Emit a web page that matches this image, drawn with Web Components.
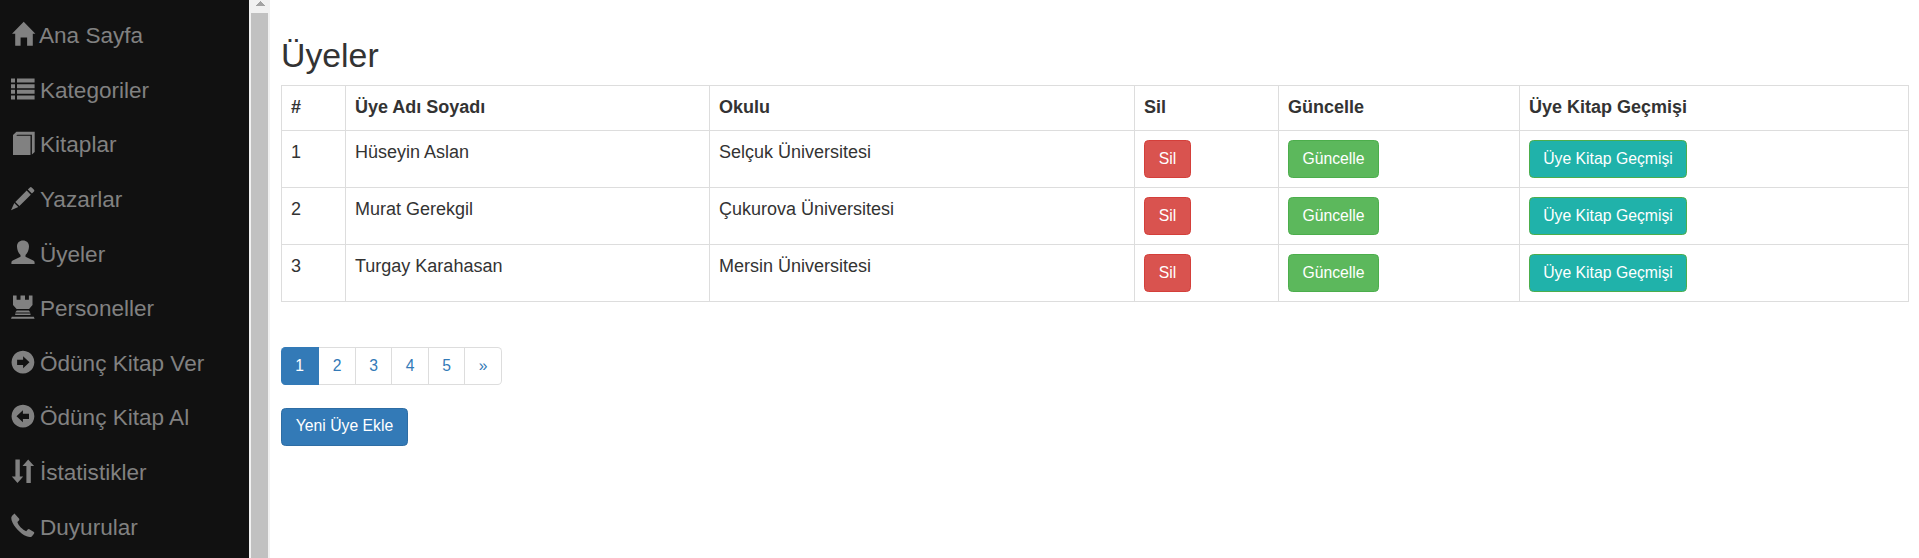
<!DOCTYPE html>
<html lang="tr">
<head>
<meta charset="utf-8">
<title>Üyeler</title>
<style>
html, body { margin: 0; height: 100%; overflow: hidden; background: #fff; }
body { font-family: "Liberation Sans", Arial, sans-serif; color: #333; }
</style>
</head>
<body>
<library-app></library-app>
<script>
const define = (name, html) => {
  const template = document.createElement('template');
  template.innerHTML = html;
  customElements.define(name, class extends HTMLElement {
    constructor() {
      super();
      this.attachShadow({ mode: 'open' }).append(template.content.cloneNode(true));
    }
  });
};

const icons = {
  home: '<path d="M12.7 -.8 24.4 11.2H21.8V23.2H16.1V14.8H9.6V23.2H4.2V11.2H1L12.7 -.8Z"/>',
  list: '<path d="M0 1h4v4H0zM6 1h17.6v4H6zM0 6.6h4v4H0zM6 6.6h17.6v4H6zM0 12.2h4v4H0zM6 12.2h17.6v4H6zM0 17.8h4v4H0zM6 17.8h17.6v4H6z"/>',
  book: '<path d="M2 3.4 5.4.2H23.7V20.3L20.9 23V3.1H6.4L5.2 4.2H19.5V23.4H2Z"/>',
  pencil: '<path d="M16.8 2.9 18.9.8Q19.8 0 20.7.8L23 3.1Q23.8 4 23 4.9L20.9 7ZM15.7 4 19.8 8.1 8.4 19.5 4.3 15.4ZM3.3 16.5 7.3 20.5 0 23.7Z"/>',
  user: '<path d="M12 0C15.7 0 18.2 2.5 18 6.2C17.8 9.4 16.8 12.5 14.5 14.3V16.2L22.3 19.8Q23.6 20.4 23.6 21.8V23.4H.4V21.8Q.4 20.4 1.7 19.8L9.5 16.2V14.3C7.2 12.5 6.2 9.4 6 6.2C5.8 2.5 8.3 0 12 0Z"/>',
  tower: '<path d="M2 0H5.6V4.2H9.5V0H14V4.2H17.9V0H21.5V9.5L18.1 13.4H5.6L2 9.5ZM5.8 15H17.9L19.3 17H4.2ZM4.2 17.8H19.5V19.4H4.2ZM.8 21.1H22.8L23.6 23.2H0Z"/>',
  right: '<path fill-rule="evenodd" d="M12 .2A11.4 11.4 0 1 1 11.9.2ZM12.1 5.7V9.2H6.1V14.3H12.1V17.7L18.5 11.7Z"/>',
  left: '<path fill-rule="evenodd" d="M12 .2A11.4 11.4 0 1 1 11.9.2ZM11.9 5.7V9.2H18V14.3H11.9V17.7L5.5 11.7Z"/>',
  sort: '<path d="M4.4 0H8.8V17H12.2L6.5 23.5.8 17H4.4ZM17.2 0 23.1 6.4H19.8V23.3H15.4V6.4H11.5Z"/>',
  phone: '<path d="M3.5 0 8.2 5.2Q8.7 6.2 7.7 7.1L6.4 8.5C7.2 11.9 11.7 16.4 15.2 17.7L16.7 16Q17.7 15.1 18.7 15.8L22.9 18.5Q23.7 19.2 23 20.2L20.8 22.8Q19.2 24 15.6 22.7C9.5 20.3 2.7 13.2.6 6.7Q-.3 3.7.9 2.4Z"/>'
};

customElements.define('side-link', class extends HTMLElement {
  connectedCallback() {
    this.attachShadow({ mode: 'open' }).innerHTML = `
      <style>
        :host { display: flex; align-items: center; gap: 5px; height: 54.6px; color: #818181; font-size: 22.55px; line-height: 28px; white-space: nowrap; }
        :host([icon=home]) { gap: 4px; }
        svg { width: 24px; height: 24px; flex: none; fill: currentColor; overflow: visible; padding-top: .6px; }
        span { padding-top: 3.8px; }
        :host([icon=home]) span { padding-top: 2.6px; }
      </style>
      <svg viewBox="0 0 24 24" aria-hidden="true">${icons[this.getAttribute('icon')]}</svg><span><slot></slot></span>`;
  }
});

define('side-nav', `
  <style>
    :host { display: block; box-sizing: border-box; width: 249px; height: 558px; overflow: hidden; background: #111; padding: 7px 0 0 11px; }
  </style>
  <nav><slot></slot></nav>`);

define('scroll-rail', `
  <style>
    :host { display: flex; flex-direction: column; align-items: center; width: 21px; height: 558px; background: #f1f1f1; }
    svg { display: block; width: 10px; height: 6px; margin: 1px 0 6px; fill: #a3a3a3; }
    div { flex: 1; width: 17px; background: #c1c1c1; }
  </style>
  <svg viewBox="0 0 10 6" shape-rendering="crispEdges"><path d="M5 0 10 5H0Z"/></svg><div></div>`);

define('app-button', `
  <style>
    :host { display: inline-block; box-sizing: border-box; height: 38px; padding: 0 13px; border: 1px solid #2e6da4; border-radius: 4.5px; background: #337ab7; color: #fff; font-size: 15.75px; line-height: 35px; text-align: center; white-space: nowrap; }
    :host([kind=danger]) { background: #d9534f; border-color: #d43f3a; }
    :host([kind=success]) { background: #5cb85c; border-color: #4cae4c; }
    :host([kind=history]) { background: #20b2aa; border-color: #4cae4c; }
  </style>
  <slot></slot>`);

customElements.define('member-table', class extends HTMLElement {
  connectedCallback() {
    const heads = ['#', 'Üye Adı Soyadı', 'Okulu', 'Sil', 'Güncelle', 'Üye Kitap Geçmişi'];
    const rows = [['Hüseyin Aslan', 'Selçuk Üniversitesi'], ['Murat Gerekgil', 'Çukurova Üniversitesi'], ['Turgay Karahasan', 'Mersin Üniversitesi']];
    this.attachShadow({ mode: 'open' }).innerHTML = `
      <style>
        :host { display: grid; box-sizing: border-box; width: 1628px; grid-template-columns: 64px 364px 425px 144px 241px 1fr; grid-template-rows: 45px repeat(3, 57px); border: solid #ddd; border-width: 0 1px 1px 0; font-size: 18px; line-height: 24px; }
        div { box-sizing: border-box; border: solid #ddd; border-width: 1px 0 0 1px; padding: 9px; white-space: nowrap; }
        .head { font-weight: bold; }
        app-button { display: block; width: 47px; }
        app-button[kind=success] { width: 91px; }
        app-button[kind=history] { width: 158px; }
      </style>
      ${heads.map(h => `<div class="head">${h}</div>`).join('')}
      ${rows.map(([name, school], i) => `<div>${i + 1}</div><div>${name}</div><div>${school}</div>
        <div><app-button kind="danger">Sil</app-button></div>
        <div><app-button kind="success">Güncelle</app-button></div>
        <div><app-button kind="history">Üye Kitap Geçmişi</app-button></div>`).join('')}`;
  }
});

define('page-list', `
  <style>
    :host { display: grid; box-sizing: border-box; width: 221px; height: 38px; grid-template-columns: 38px 37px 36px 37px 36px 37px; font-size: 15.7px; line-height: 35px; color: #337ab7; text-align: center; }
    span { border: solid #ddd; border-width: 1px 1px 1px 0; }
    .on { background: #337ab7; border-color: #337ab7; color: #fff; border-radius: 4.5px 0 0 4.5px; }
    span:last-child { border-radius: 0 4.5px 4.5px 0; }
  </style>
  <span class="on">1</span><span>2</span><span>3</span><span>4</span><span>5</span><span>»</span>`);

define('library-app', `
  <style>
    :host { display: flex; height: 558px; }
    main { padding: 35px 0 0 11px; }
    h1 { margin: 0 0 10px; font-size: 33.8px; font-weight: 400; line-height: 40px; }
    page-list { margin: 45px 0 23px; }
    app-button { width: 127px; line-height: 34px; }
  </style>
  <side-nav>
    <side-link icon="home">Ana Sayfa</side-link>
    <side-link icon="list">Kategoriler</side-link>
    <side-link icon="book">Kitaplar</side-link>
    <side-link icon="pencil">Yazarlar</side-link>
    <side-link icon="user">Üyeler</side-link>
    <side-link icon="tower">Personeller</side-link>
    <side-link icon="right">Ödünç Kitap Ver</side-link>
    <side-link icon="left">Ödünç Kitap Al</side-link>
    <side-link icon="sort">İstatistikler</side-link>
    <side-link icon="phone">Duyurular</side-link>
  </side-nav>
  <scroll-rail></scroll-rail>
  <main>
    <h1>Üyeler</h1>
    <member-table></member-table>
    <page-list></page-list>
    <app-button>Yeni Üye Ekle</app-button>
  </main>`);
</script>
</body>
</html>
